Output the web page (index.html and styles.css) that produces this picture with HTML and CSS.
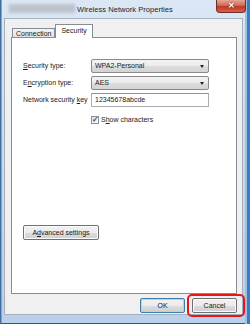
FILE: index.html
```html
<!DOCTYPE html>
<html lang="en">

<head>
    <meta charset="UTF-8">
    <title>Wireless Network Properties</title>
    <link rel="stylesheet" href="styles.css">
</head>

<body>
    <div class="window">
        <div class="titlebar">
            <div class="title-blur"></div>
            <span class="title">Wireless Network Properties</span>
            <div class="close-button">&#x2715;</div>
        </div>
        <div class="client">
            <div class="tabs">
                <div class="tab">Connection</div>
                <div class="tab active">Security</div>
            </div>
            <div class="panel">
                <div class="form-grid">
                    <label><u>S</u>ecurity type:</label>
                    <div class="combo">WPA2-Personal<span class="arrow"></span></div>
                    <label>E<u>n</u>cryption type:</label>
                    <div class="combo">AES<span class="arrow"></span></div>
                    <label>Network security <u>k</u>ey</label>
                    <div class="textbox">12345678abcde</div>
                    <span></span>
                    <div class="check-row">
                        <span class="checkbox">&#x2713;</span>
                        <span>S<u>h</u>ow characters</span>
                    </div>
                </div>
                <button class="btn advanced">A<u>d</u>vanced settings</button>
            </div>
            <div class="footer">
                <button class="btn default">OK</button>
                <button class="btn">Cancel</button>
            </div>
        </div>
        <div class="highlight"></div>
    </div>
</body>

</html>
```

FILE: styles.css
```css
* {
    box-sizing: border-box;
    margin: 0;
    padding: 0;
}

body {
    width: 250px;
    height: 324px;
    font-family: 'Liberation Sans', Arial, sans-serif;
    font-size: 7px;
    color: #1a1a1a;
    background: #ffffff;
}

.window {
    position: relative;
    width: 250px;
    height: 324px;
    display: flex;
    flex-direction: column;
    padding: 0 7px 9px 3px;
    background: linear-gradient(#dbe7f4, #c6d9ee 60%, #b9d0ea);
    border-left: 1px solid #3f6e9f;
    box-shadow: inset -3px 0 0 #3a7cc3, inset -5px 0 0 #9cc0e4, inset 0 -1px 0 #2d5684, inset 1px 0 0 #7ea8d4;
}

.titlebar {
    position: relative;
    height: 18px;
    display: flex;
    align-items: center;
}

.title-blur {
    position: absolute;
    left: 5px;
    top: 4px;
    width: 66px;
    height: 9px;
    background: #bcc3cd;
    filter: blur(1.5px);
}

.title {
    margin-left: 73px;
    margin-top: 1px;
    font-size: 7.6px;
    color: #1c2530;
}

.close-button {
    position: absolute;
    right: -3px;
    top: 0;
    width: 30px;
    height: 13px;
    border: 1px solid #6b2e25;
    border-top: none;
    border-radius: 0 0 4px 4px;
    background: linear-gradient(#e7a597, #d06a56 45%, #bd3a26 55%, #d6614a);
    color: #ffffff;
    font-size: 8px;
    font-weight: bold;
    text-align: center;
    line-height: 12px;
    text-shadow: 0 0 2px #5a1d12;
}

.client {
    flex: 1;
    display: flex;
    flex-direction: column;
    background: #f0f0f0;
    padding: 5px 5px 0 6px;
    border: 1px solid #a5b0bd;
}

.tabs {
    display: flex;
    align-items: flex-end;
    height: 13px;
    padding-left: 1px;
}

.tab {
    height: 9px;
    padding: 0 3px;
    border: 1px solid #898c95;
    border-bottom: none;
    background: linear-gradient(#f3f3f3, #e3e3e3);
    line-height: 9px;
    margin-bottom: 0;
}

.tab.active {
    position: relative;
    height: 14px;
    margin-bottom: -1px;
    padding: 0 5px;
    background: #ffffff;
    line-height: 12px;
    z-index: 1;
}

.panel {
    height: 257px;
    display: flex;
    flex-direction: column;
    background: #ffffff;
    border: 1px solid #898c95;
    padding: 21px 0 0 11px;
}

.form-grid {
    display: grid;
    grid-template-columns: 68px 118px;
    grid-auto-rows: 14px;
    row-gap: 3px;
    align-items: center;
}

.form-grid label {
    line-height: 14px;
}

.combo {
    position: relative;
    height: 14px;
    padding-left: 3px;
    line-height: 12px;
    border: 1px solid #8a8a8a;
    border-radius: 2px;
    background: linear-gradient(#f4f4f4, #ebebeb 50%, #dddddd 51%, #d3d3d3);
}

.arrow {
    position: absolute;
    right: 4px;
    top: 5px;
    border-left: 2.5px solid transparent;
    border-right: 2.5px solid transparent;
    border-top: 3px solid #222222;
}

.textbox {
    height: 14px;
    padding-left: 3px;
    line-height: 12px;
    border: 1px solid #abadb3;
    border-top-color: #8e9198;
    background: #ffffff;
}

.check-row {
    display: flex;
    align-items: center;
    gap: 2px;
    margin-top: 5px;
}

.checkbox {
    width: 8px;
    height: 8px;
    border: 1px solid #8f8f8f;
    background: linear-gradient(135deg, #dedede, #fafafa);
    color: #2b4f8f;
    font-size: 8px;
    font-weight: bold;
    line-height: 6px;
    text-align: center;
}

.btn {
    height: 15px;
    font-family: inherit;
    font-size: 7px;
    color: #1a1a1a;
    border: 1px solid #707070;
    border-radius: 2px;
    background: linear-gradient(#f2f2f2, #ebebeb 50%, #dddddd 51%, #cfcfcf);
    box-shadow: inset 0 0 0 1px #fbfbfb;
}

.advanced {
    width: 76px;
    margin-top: auto;
    margin-bottom: 53px;
}

.footer {
    display: flex;
    justify-content: flex-end;
    gap: 7px;
    padding-top: 4px;
}

.footer .btn {
    width: 45px;
    height: 15px;
}

.btn.default {
    border-color: #3c7fb1;
    box-shadow: inset 0 0 0 1px #a6d8f5;
}

.highlight {
    position: absolute;
    left: 186px;
    top: 294px;
    width: 58px;
    height: 23px;
    border: 2.5px solid #e8141e;
    border-radius: 5px;
}
```
